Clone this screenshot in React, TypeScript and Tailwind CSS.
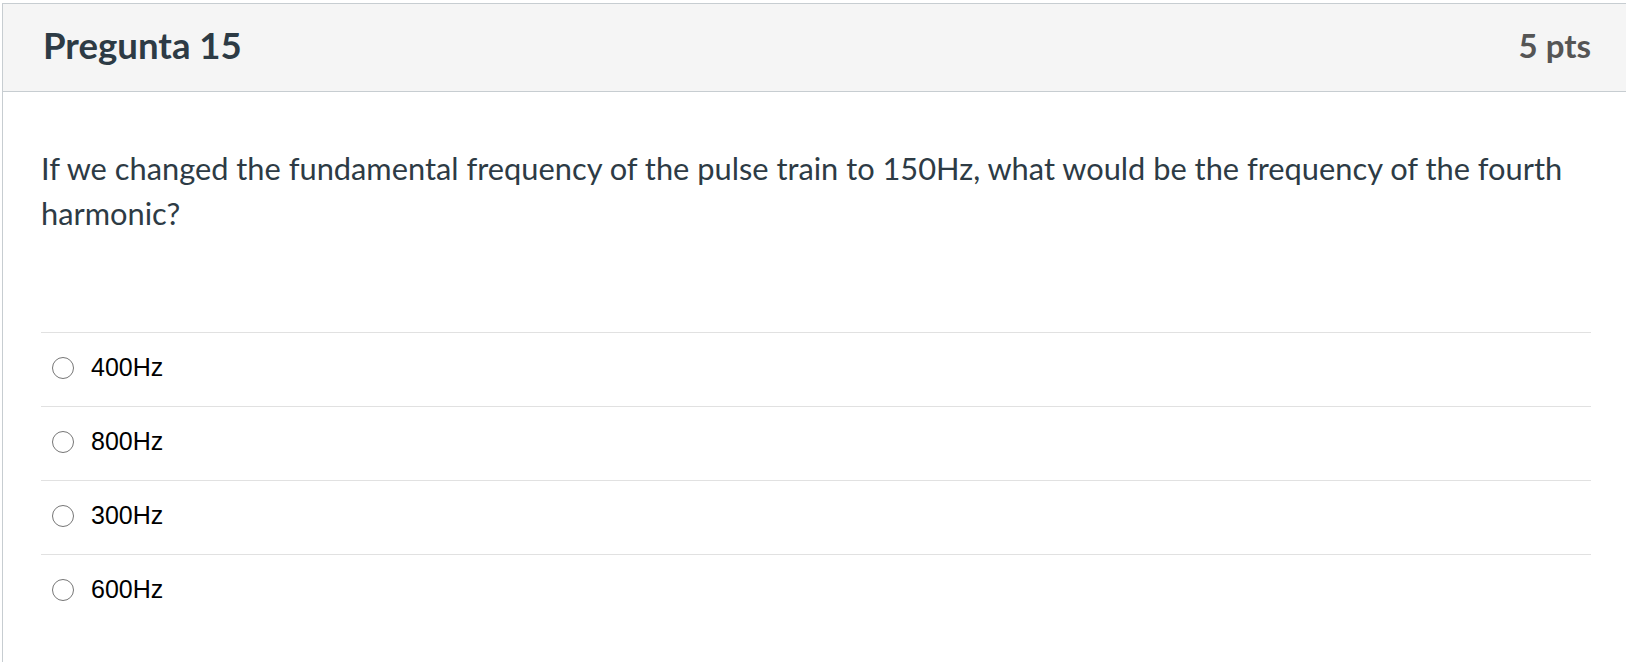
const answers = ["400Hz", "800Hz", "300Hz", "600Hz"];

function Answer({ label }: { label: string }) {
  return (
    <label className="flex h-[74px] items-center gap-[17px] border-t border-[#e1e1e1] pl-[11px] pb-[3px]">
      <span className="box-border h-[22px] w-[22px] shrink-0 rounded-full border-[1.5px] border-[#767676] bg-white" />
      <span className="text-[25px] text-black [font-family:'Liberation_Sans',Arial,sans-serif]">
        {label}
      </span>
    </label>
  );
}

export default function App() {
  return (
    <div className="h-[662px] w-[1626px] overflow-hidden bg-white pl-[2px] pt-[3px]">
      <div className="w-[1640px] min-h-[700px] border border-[#c7cdd1] [font-family:Lato,'Noto_Sans',sans-serif]">
        <div className="flex h-[88px] items-center justify-between border-b border-[#c7cdd1] bg-[#f5f5f5] pb-[3px] pl-[40px] pr-[50px]">
          <h2 className="text-[36.6px] font-bold leading-[1.2] text-[#2d3b45]">Pregunta 15</h2>
          <span className="text-[33px] font-bold leading-[1.2] text-[#555555]">5 pts</span>
        </div>
        <div className="pl-[38px] pr-[50px] pt-[54px]">
          <p className="text-[30.8px] leading-[45px] text-[#2d3b45]">
            If we changed the fundamental frequency of the pulse train to 150Hz, what would be the
            frequency of the fourth harmonic?
          </p>
          <div className="mt-[96px]">
            {answers.map((a) => (
              <Answer key={a} label={a} />
            ))}
          </div>
        </div>
      </div>
    </div>
  );
}
